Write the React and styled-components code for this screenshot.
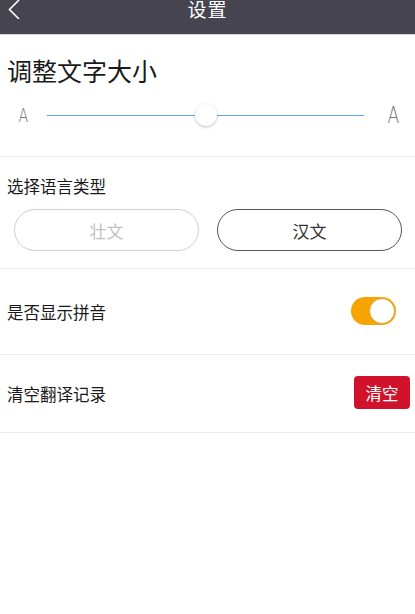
import React from "react";
import styled, { createGlobalStyle } from "styled-components";

const Global = createGlobalStyle`
  html, body { margin: 0; padding: 0; background: #fff; }
  body { font-family: "Noto Sans CJK SC", "Noto Sans", sans-serif; color: #222; }
`;

const Page = styled.div`
  width: 415px;
  min-height: 614px;
  background: #fff;
`;

const Header = styled.header`
  position: relative;
  height: 34px;
  background: #45444f;
  border-bottom: 1px solid #d8d8d8;
  display: flex;
  justify-content: center;
  align-items: flex-start;
`;

const Back = styled.svg`
  position: absolute;
  left: 7px;
  top: 0;
`;

const Title = styled.div`
  color: #fff;
  font-size: 19px;
  line-height: 18px;
  letter-spacing: 1px;
`;

const Section = styled.section`
  border-bottom: 1px solid #ececec;
  padding: ${(p) => p.$pad};
`;

const BigTitle = styled.div`
  font-size: 25px;
  line-height: 28px;
  color: #1a1a1a;
  padding-left: 7px;
`;

const SliderRow = styled.div`
  display: flex;
  align-items: center;
  height: 28px;
  margin-top: 17px;
  padding: 0 17px 0 17px;
`;

const ALabel = styled.span`
  font-family: "DejaVu Sans", sans-serif;
  font-weight: 200;
  color: #777;
  font-size: ${(p) => p.$size}px;
  line-height: 1;
  width: ${(p) => p.$w}px;
  text-align: center;
  transform: scaleX(0.75);
`;

const Track = styled.div`
  flex: 1;
  height: 1px;
  margin: 0 22px 0 19px;
  background: #5fa6ee;
  position: relative;
`;

const Thumb = styled.div`
  position: absolute;
  top: 50%;
  width: 22px;
  height: 22px;
  border-radius: 50%;
  background: #fff;
  transform: translate(-50%, -50%);
  box-shadow: 0 1px 3px rgba(0, 0, 0, 0.25);
`;

const Label = styled.div`
  font-size: 16.5px;
  line-height: 20px;
  color: #1a1a1a;
  padding-left: 7px;
`;

const ButtonRow = styled.div`
  display: grid;
  grid-template-columns: 1fr 1fr;
  gap: 18px;
  margin-top: 13px;
  padding: 0 13px 0 14px;
`;

const Pill = styled.div`
  height: 40px;
  border-radius: 21px;
  border: 1px solid ${(p) => (p.$active ? "#555560" : "#cfcfcf")};
  color: ${(p) => (p.$active ? "#333" : "#c2c2c2")};
  display: flex;
  align-items: center;
  justify-content: center;
  font-size: 17px;
`;

const Row = styled.div`
  height: ${(p) => p.$h}px;
  display: flex;
  align-items: center;
  justify-content: space-between;
  border-bottom: 1px solid #ececec;
  padding-right: ${(p) => p.$pr}px;
`;

const Toggle = styled.div`
  width: 45px;
  height: 28px;
  border-radius: 14px;
  background: #f6a500;
  position: relative;
  margin-top: -2px;
`;

const Knob = styled.div`
  position: absolute;
  right: 1px;
  top: 1px;
  width: 24px;
  height: 24px;
  border-radius: 50%;
  background: #fff;
  border: 1px solid #d9a43a;
`;

const ClearButton = styled.div`
  width: 56px;
  height: 33px;
  border-radius: 4px;
  background: #d0132b;
  color: #fff;
  font-size: 16.5px;
  display: flex;
  align-items: center;
  justify-content: center;
  margin-top: -2px;
`;

export default function App() {
  return (
    <Page>
      <Global />
      <Header>
        <Back width="14" height="19" viewBox="0 0 14 19">
          <path d="M12 0 L2.5 9.5 L12 19" fill="none" stroke="#fff" strokeWidth="1.6" />
        </Back>
        <Title>设置</Title>
      </Header>
      <Section $pad="21px 0 27px">
        <BigTitle>调整文字大小</BigTitle>
        <SliderRow>
          <ALabel $size={19} $w={11}>A</ALabel>
          <Track>
            <Thumb style={{ left: "50%" }} />
          </Track>
          <ALabel $size={23} $w={12}>A</ALabel>
        </SliderRow>
      </Section>
      <Section $pad="19px 0 17px">
        <Label>选择语言类型</Label>
        <ButtonRow>
          <Pill>壮文</Pill>
          <Pill $active>汉文</Pill>
        </ButtonRow>
      </Section>
      <Row $h={85} $pr={19}>
        <Label>是否显示拼音</Label>
        <Toggle>
          <Knob />
        </Toggle>
      </Row>
      <Row $h={77} $pr={5}>
        <Label>清空翻译记录</Label>
        <ClearButton>清空</ClearButton>
      </Row>
    </Page>
  );
}
